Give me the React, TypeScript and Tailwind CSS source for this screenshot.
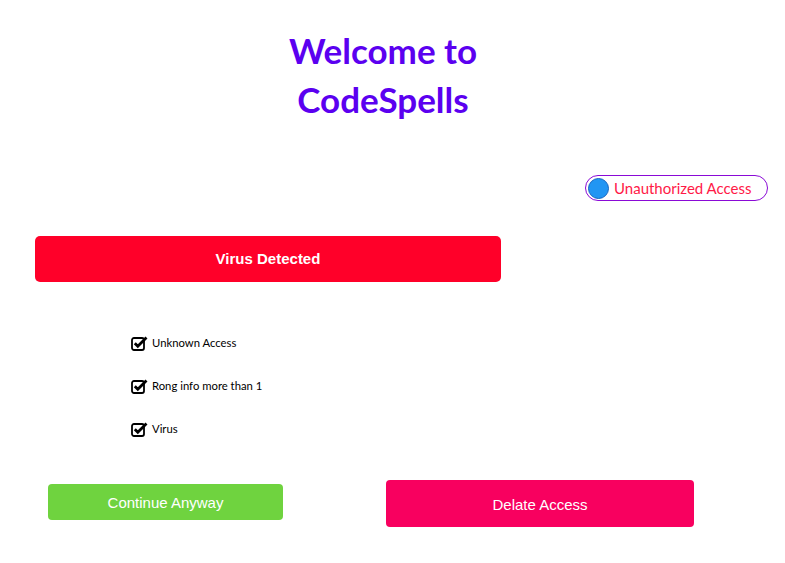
import React from "react";

function CheckIcon() {
  return (
    <svg width="17" height="16" viewBox="0 0 17 16" className="shrink-0">
      <rect x="1" y="3" width="12" height="12" rx="2" fill="none" stroke="#000" strokeWidth="1.8" />
      <path d="M3.8 8.2 L6.8 11.2 L15.5 2.5" fill="none" stroke="#000" strokeWidth="2.8" strokeLinejoin="miter" />
    </svg>
  );
}

export default function App() {
  const items = ["Unknown Access", "Rong info more than 1", "Virus"];
  return (
    <div className="w-[785px] h-[563px] bg-white relative overflow-hidden" style={{ fontFamily: "Lato, sans-serif" }}>
      <div className="w-[766px] pt-[26px] flex flex-col items-center">
        <h1 className="text-[35px] leading-[49px] font-bold text-[#5b00f0] text-center" style={{ fontFamily: "Lato, sans-serif" }}>
          Welcome to
          <br />
          CodeSpells
        </h1>
      </div>
      <div className="flex justify-end pr-[17px] mt-[51px]">
        <div className="flex items-center h-[26px] w-[183px] rounded-full border border-[#8a0ad6] pl-[2px] gap-[5px]">
          <div className="w-[21px] h-[21px] rounded-full bg-[#2196f3] border border-[#1565c0]" />
          <span className="text-[15px] text-[#ff1a47]">Unauthorized Access</span>
        </div>
      </div>
      <div className="pl-[35px] mt-[35px]">
        <div className="w-[466px] h-[46px] rounded-[5px] bg-[#ff0029] flex items-center justify-center text-white font-bold text-[15px] pt-[1px]" style={{ fontFamily: "'Liberation Sans', Arial, sans-serif" }}>
          Virus Detected
        </div>
      </div>
      <div className="pl-[131px] mt-[53px] flex flex-col gap-[27px]">
        {items.map((t) => (
          <div key={t} className="flex items-center gap-[4px] h-[16px]">
            <CheckIcon />
            <span className="text-[11.3px] text-black">{t}</span>
          </div>
        ))}
      </div>
      <div className="flex items-start mt-[43px]" style={{ fontFamily: "'Liberation Sans', Arial, sans-serif" }}>
        <div className="ml-[48px] mt-[4px] w-[235px] h-[36px] rounded-[4px] bg-[#6fd33f] flex items-center justify-center text-white text-[15px] pt-[2px]">
          Continue Anyway
        </div>
        <div className="ml-[103px] w-[308px] h-[47px] rounded-[4px] bg-[#f8005f] flex items-center justify-center text-white text-[15px] pt-[3px]">
          Delate Access
        </div>
      </div>
    </div>
  );
}
